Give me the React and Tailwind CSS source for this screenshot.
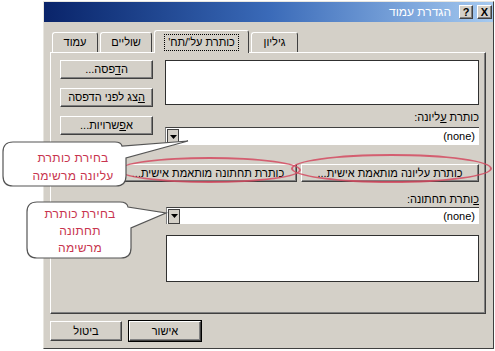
import React from "react";

const raised =
  "bg-[#d4d0c8] border border-t-white border-l-white border-r-[#404040] border-b-[#404040] shadow-[inset_-1px_-1px_0_#808080]";

function Btn({ className = "", children }) {
  return (
    <div
      dir="rtl"
      className={`${raised} flex items-center justify-center text-[11px] leading-none text-black ${className}`}
    >
      {children}
    </div>
  );
}

function Dropdown({ className = "" }) {
  return (
    <div
      className={`flex items-center bg-white border-t border-l border-t-[#404040] border-l-[#808080] ${className}`}
    >
      <div className="ml-[1px] w-[12px] h-[15px] bg-[#d4d0c8] border border-[#404040] flex items-center justify-center">
        <svg width="7" height="4" viewBox="0 0 7 4">
          <path d="M0 0 H7 L3.5 4 Z" fill="#000" />
        </svg>
      </div>
      <div className="flex-1 text-right pr-[4px] text-[11px] leading-none">(none)</div>
    </div>
  );
}

function Tab({ label, active, className = "" }) {
  return (
    <div
      dir="rtl"
      className={`relative flex items-center justify-center text-[11px] leading-none border-t border-l border-r border-t-white border-l-white border-r-[#404040] rounded-t-[3px] bg-[#d4d0c8] ${
        active ? "h-[23px] -mb-[1px] z-10" : "h-[20px]"
      } ${className}`}
    >
      {active ? (
        <span className="border border-dotted border-black px-[3px] py-[2px]">{label}</span>
      ) : (
        label
      )}
    </div>
  );
}

export default function App() {
  return (
    <div
      className="relative w-[495px] h-[351px] bg-white overflow-hidden text-black"
      style={{ fontFamily: '"Liberation Sans", "DejaVu Sans", sans-serif' }}
    >
      <div className="ml-[43px] mt-[1px] w-[451px] h-[348px] bg-[#d4d0c8] border-l border-t border-l-[#e8e6e0] border-t-[#e8e6e0] border-r border-b border-r-[#404040] border-b-[#404040] flex flex-col">
        {/* title bar */}
        <div className="h-[20px] flex items-center justify-end gap-[4px] pr-[1px] bg-linear-to-r from-[#0a246a] via-[#3a6ab8] to-[#a6caf0]">
          <span dir="rtl" className="text-white text-[12px] leading-none mr-[4px]">
            הגדרת עמוד
          </span>
          <div className={`${raised} w-[14px] h-[14px] flex items-center justify-center text-[11px] font-bold leading-none`}>?</div>
          <div className={`${raised} w-[15px] h-[14px] flex items-center justify-center text-[11px] font-bold leading-none`}>X</div>
        </div>

        {/* tabs */}
        <div className="mt-[7px] pl-[8px] flex items-end gap-[2px] h-[23px]">
          <Tab label="עמוד" className="w-[46px]" />
          <Tab label="שוליים" className="w-[52px]" />
          <Tab label="כותרת על'/תח'" active className="w-[95px]" />
          <Tab label="גיליון" className="w-[47px]" />
        </div>

        {/* panel */}
        <div className="ml-[6px] w-[436px] h-[262px] border border-t-white border-l-white border-r-[#404040] border-b-[#404040] shadow-[inset_-1px_-1px_0_#808080] pt-[7px] pl-[9px] pr-[6px] flex flex-col">
          <div className="flex gap-[12px]">
            <div className="w-[93px] flex flex-col gap-[9px]">
              <Btn className="h-[19px]">
                <span>
                  ה<u>ד</u>פסה...
                </span>
              </Btn>
              <Btn className="h-[19px]">
                <span>
                  <u>ה</u>צג לפני הדפסה
                </span>
              </Btn>
              <Btn className="h-[19px]">
                <span>
                  א<u>פ</u>שרויות...
                </span>
              </Btn>
            </div>
            <div className="flex-1 flex flex-col">
              <div className="h-[45px] bg-white border border-[#303030]" />
              <div dir="rtl" className="mt-[6px] h-[13px] text-[11px] leading-[13px]">
                כותרת <u>ע</u>ליונה:
              </div>
              <Dropdown className="mt-[3px] h-[18px]" />
            </div>
          </div>

          <div className="mt-[19px] flex justify-end gap-[4px]">
            <Btn className="w-[178px] h-[18px] text-[11.5px]">כותרת תחתונה מותאמת אישית...</Btn>
            <Btn className="w-[178px] h-[18px] text-[11.5px]">כותרת עליונה מותאמת אישית...</Btn>
          </div>

          <div className="flex justify-end">
            <div className="w-[313px] flex flex-col">
              <div dir="rtl" className="mt-[11px] h-[13px] text-[11px] leading-[13px]">
                <u>כ</u>ותרת תחתונה:
              </div>
              <Dropdown className="mt-[1px] h-[17px]" />
              <div className="mt-[11px] h-[47px] bg-white border border-[#303030]" />
            </div>
          </div>
        </div>

        {/* footer buttons */}
        <div className="mt-[7px] ml-[6px] flex gap-[7px]">
          <Btn className="w-[72px] h-[20px]">ביטול</Btn>
          <Btn className="w-[72px] h-[20px] outline outline-1 outline-black">אישור</Btn>
        </div>
      </div>

      {/* red highlight ellipses */}
      <div className="absolute left-[118px] top-[157px] w-[183px] h-[26px] rounded-[50%] border-2 border-[#d44a60]/85" />
      <div className="absolute left-[291px] top-[154px] w-[201px] h-[29px] rounded-[50%] border-2 border-[#d44a60]/85" />

      {/* callouts */}
      <svg className="absolute left-0 top-0" width="495" height="351" viewBox="0 0 495 351">
        <path
          d="M13 142 H115 Q121 142 122 146 L188 141 L126 158 V176 Q126 186 116 186 H13 Q3 186 3 176 V152 Q3 142 13 142 Z"
          fill="#fff"
          stroke="#555"
          strokeWidth="1.2"
        />
        <path
          d="M37 202 H120 Q127 202 128 207 L166 213 L131 228 V248 Q131 258 121 258 H37 Q27 258 27 248 V212 Q27 202 37 202 Z"
          fill="#fff"
          stroke="#555"
          strokeWidth="1.2"
        />
      </svg>
      <div
        dir="rtl"
        className="absolute left-[14px] top-[149px] w-[118px] text-center text-[12px] leading-[18px] tracking-[0.3px] text-[#c8344e]"
      >
        בחירת כותרת
        <br />
        עליונה מרשימה
      </div>
      <div
        dir="rtl"
        className="absolute left-[30px] top-[206px] w-[100px] text-center text-[12px] leading-[17px] tracking-[0.3px] text-[#c8344e]"
      >
        בחירת כותרת
        <br />
        תחתונה
        <br />
        מרשימה
      </div>
    </div>
  );
}
